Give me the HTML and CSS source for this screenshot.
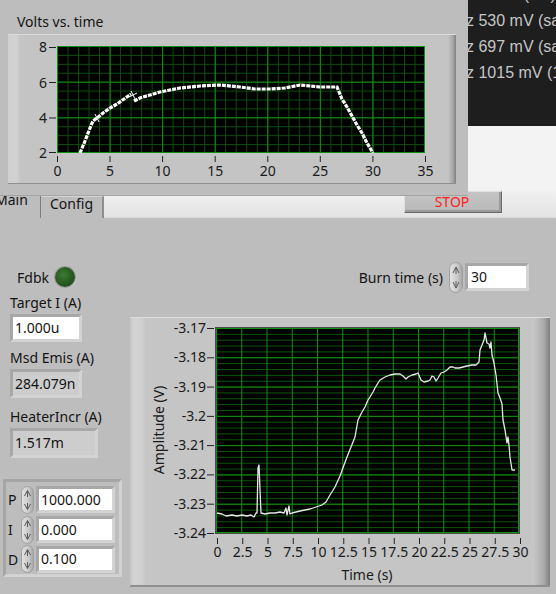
FILE: index.html
```html
<!DOCTYPE html>
<html>
<head>
<meta charset="utf-8">
<link rel="stylesheet" href="styles.css">
</head>
<body>
<div class="lv">
  <div class="lv-top"></div>
  <div class="tabbar">
    <div class="tab tab-active"><span>Main</span></div>
    <div class="tab tab-config">Config</div>
    <div class="tab-strip"><button class="stop">STOP</button></div>
  </div>
  <div class="page">
    <div class="left-col">
      <div class="fdbk"><span>Fdbk</span><span class="led"></span></div>
      <div class="lbl lbl-target">Target I (A)</div>
      <div class="num ctl w72 h28"><span>1.000u</span></div>
      <div class="lbl lbl-msd">Msd Emis (A)</div>
      <div class="num ind w72 h29"><span>284.079n</span></div>
      <div class="lbl lbl-heat">HeaterIncr (A)</div>
      <div class="num ind w88 h30"><span>1.517m</span></div>
      <div class="cluster">
        <div class="pid-row">
          <span class="pid-lbl">P</span>
          <svg class="spin" width="13" height="28" viewBox="0 0 13 28"><defs><linearGradient id="sg" x1="0" x2="1" y1="0" y2="0"><stop offset="0" stop-color="#e4e4e4"/><stop offset="0.6" stop-color="#c9c9c9"/><stop offset="1" stop-color="#a2a2a2"/></linearGradient></defs><rect x="0.5" y="0.5" width="12" height="27" rx="6" fill="url(#sg)" stroke="#a0a0a0"/><path d="M3.5 10 L6.5 4.5 L9.5 10 M6.5 5 V11" fill="none" stroke="#5a5a5a" stroke-width="1"/><path d="M3.5 18 L6.5 23.5 L9.5 18 M6.5 23 V17" fill="none" stroke="#5a5a5a" stroke-width="1"/></svg>
          <div class="num ctl pid-box"><span>1000.000</span></div>
        </div>
        <div class="pid-row">
          <span class="pid-lbl">I</span>
          <svg class="spin" width="13" height="28" viewBox="0 0 13 28"><rect x="0.5" y="0.5" width="12" height="27" rx="6" fill="url(#sg)" stroke="#a0a0a0"/><path d="M3.5 10 L6.5 4.5 L9.5 10 M6.5 5 V11" fill="none" stroke="#5a5a5a" stroke-width="1"/><path d="M3.5 18 L6.5 23.5 L9.5 18 M6.5 23 V17" fill="none" stroke="#5a5a5a" stroke-width="1"/></svg>
          <div class="num ctl pid-box"><span>0.000</span></div>
        </div>
        <div class="pid-row">
          <span class="pid-lbl">D</span>
          <svg class="spin" width="13" height="28" viewBox="0 0 13 28"><rect x="0.5" y="0.5" width="12" height="27" rx="6" fill="url(#sg)" stroke="#a0a0a0"/><path d="M3.5 10 L6.5 4.5 L9.5 10 M6.5 5 V11" fill="none" stroke="#5a5a5a" stroke-width="1"/><path d="M3.5 18 L6.5 23.5 L9.5 18 M6.5 23 V17" fill="none" stroke="#5a5a5a" stroke-width="1"/></svg>
          <div class="num ctl pid-box"><span>0.100</span></div>
        </div>
      </div>
    </div>
    <div class="right-col">
      <div class="burn">
        <span class="burn-lbl">Burn time (s)</span>
        <svg class="spin spin-burn" width="14" height="31" viewBox="0 0 14 31"><rect x="0.5" y="0.5" width="13" height="30" rx="6.5" fill="url(#sg)" stroke="#a0a0a0"/><path d="M4 11 L7 5 L10 11 M7 5.5 V12" fill="none" stroke="#5a5a5a" stroke-width="1"/><path d="M4 20 L7 26 L10 20 M7 25.5 V19" fill="none" stroke="#5a5a5a" stroke-width="1"/></svg>
        <div class="num ctl burn-box"><span>30</span></div>
      </div>
      <div class="graph-frame">
        <svg width="420" height="270" viewBox="130 317 420 270">
          <defs>
            <pattern id="bmin" patternUnits="userSpaceOnUse" x="216" y="328" width="25.25" height="5.857">
              <path d="M0 0.5 H25.25" stroke="#0c560c" stroke-width="1"/>
            </pattern>
            <pattern id="bmaj" patternUnits="userSpaceOnUse" x="216" y="328" width="25.25" height="29.286">
              <path d="M0.5 0 V29.286 M0 0.5 H25.25" stroke="#10900f" stroke-width="1"/>
            </pattern>
          </defs>
          <rect x="216" y="328" width="303" height="205" fill="#000"/>
          <rect x="216" y="328" width="303" height="205" fill="url(#bmin)"/>
          <rect x="216" y="328" width="303" height="205" fill="url(#bmaj)"/>
          <path d="M518.5 328 V533 M216 532.5 H519" stroke="#10900f"/>
          <rect x="215.5" y="327.5" width="304" height="206" fill="none" stroke="#4a4a4a"/>
          <polyline fill="none" stroke="#e8e8e8" stroke-width="1.3" stroke-linejoin="round" points="217,513 222,514 226,516 232,515 237,516 242,515 247,516 251,515 254,517 256,513 257,513 258,468 259,465 260,490 261,513 265,514 270,513 275,513 280,512 284,513 286,508 287,515 289,506 290,514 292,513 296,512 300,511 305,510 310,509 316,507 322,505 326,502 330,495 335,487 340,476 344,465 347,457 351,447 355,437 358,420 362,412 365,407 368,400 370,397 373,392 375,388 378,383 380,380 385,377 390,375 395,374 400,374 403,376 406,379 408,377 412,375 416,374 418,373 421,380 424,382 428,381 430,380 432,376 434,377 436,381 438,378 441,373 444,372 447,370 450,367 453,367 455,368 459,368 463,367 467,366 472,365 476,365 479,362 480,350 482,345 484,340 485,333 486,338 487,343 489,344 490,348 491,342 492,355 494,363 496,375 498,393 500,398 502,404 503,420 505,430 507,443 508,437 509,445 510,457 512,470 515,470"/>
          <g class="ax" text-anchor="end">
            <text x="206" y="333">-3.17</text>
            <text x="206" y="362.3">-3.18</text>
            <text x="206" y="391.6">-3.19</text>
            <text x="206" y="420.9">-3.2</text>
            <text x="206" y="450.1">-3.21</text>
            <text x="206" y="479.4">-3.22</text>
            <text x="206" y="508.7">-3.23</text>
            <text x="206" y="538">-3.24</text>
          </g>
          <path stroke="#222" stroke-width="1" d="M207 328.5H214 M207 357.8H214 M207 387.1H214 M207 416.4H214 M207 445.6H214 M207 474.9H214 M207 504.2H214 M207 533.5H214"/>
          <path stroke="#222" stroke-width="1" d="M217.5 538V544 M242.75 538V544 M268 538V544 M293.25 538V544 M318.5 538V544 M343.75 538V544 M369 538V544 M394.25 538V544 M419.5 538V544 M444.75 538V544 M470 538V544 M495.25 538V544 M520.5 538V544"/>
          <g class="ax" text-anchor="middle">
            <text x="217.5" y="557">0</text>
            <text x="242.75" y="557">2.5</text>
            <text x="268" y="557">5</text>
            <text x="293.25" y="557">7.5</text>
            <text x="318.5" y="557">10</text>
            <text x="343.75" y="557">12.5</text>
            <text x="369" y="557">15</text>
            <text x="394.25" y="557">17.5</text>
            <text x="419.5" y="557">20</text>
            <text x="444.75" y="557">22.5</text>
            <text x="470" y="557">25</text>
            <text x="495.25" y="557">27.5</text>
            <text x="520.5" y="557">30</text>
            <text x="367" y="580">Time (s)</text>
            <text x="0" y="0" transform="translate(164 430) rotate(-90)">Amplitude (V)</text>
          </g>
        </svg>
      </div>
    </div>
  </div>
</div>

<div class="dark-win">
  <div class="dline dline-cut">z 1 kHz (1 s)</div>
  <div class="dline">z 530 mV (sample)</div>
  <div class="dline">z 697 mV (sample)</div>
  <div class="dline">z 1015 mV (1 s)</div>
</div>

<div class="float-win">
  <div class="float-title">Volts vs. time</div>
  <div class="tframe">
    <svg width="448" height="150" viewBox="8 34 448 150">
      <defs>
        <pattern id="tmin" patternUnits="userSpaceOnUse" x="57" y="46" width="10.514" height="8.917">
          <path d="M0.5 0 V8.917 M0 0.5 H10.514" stroke="#0b4d0b" stroke-width="1"/>
        </pattern>
        <pattern id="tmaj" patternUnits="userSpaceOnUse" x="57" y="46" width="52.571" height="35.667">
          <path d="M0.5 0 V35.667 M0 0.5 H52.571" stroke="#109010" stroke-width="1"/>
        </pattern>
      </defs>
      <rect x="57" y="46" width="368" height="107" fill="#000"/>
      <rect x="57" y="46" width="368" height="107" fill="url(#tmin)"/>
      <rect x="57" y="46" width="368" height="107" fill="url(#tmaj)"/>
      <path d="M424.5 46 V153 M57 152.5 H425" stroke="#109010"/>
      <polyline fill="none" stroke="#fff" stroke-width="3.2" stroke-dasharray="4 1" points="80,153 85,141 90,128 93,121 97,118 103,113 110,108 117,104 124,99 131,94"/>
      <polyline fill="none" stroke="#fff" stroke-width="3.2" stroke-dasharray="4 1" points="134,101 140,98 150,95 160,92 170,90 180,88 200,86 220,85 240,87 255,89 270,89 285,88 300,85 320,87 337,87 342,99 347,107 352,116 357,125 362,133 367,143 373,153"/>
      <path d="M95 114 L99 122 M93 120 L101 116 M131 91 L135 99 M129 97 L137 93" stroke="#fff" stroke-width="1"/>
      <g class="ax" text-anchor="end">
        <text x="47" y="52">8</text>
        <text x="47" y="87.7">6</text>
        <text x="47" y="123.3">4</text>
        <text x="47" y="158">2</text>
      </g>
      <path stroke="#222" stroke-width="1" d="M49 47.5H56 M49 82.5H56 M49 118H56 M49 152.5H56"/>
      <path stroke="#222" stroke-width="1" d="M57.5 156V162 M110 156V162 M162.6 156V162 M215.2 156V162 M267.8 156V162 M320.3 156V162 M372.9 156V162 M425.5 156V162"/>
      <g class="ax" text-anchor="middle">
        <text x="57.5" y="176">0</text>
        <text x="110" y="176">5</text>
        <text x="162.6" y="176">10</text>
        <text x="215.2" y="176">15</text>
        <text x="267.8" y="176">20</text>
        <text x="320.3" y="176">25</text>
        <text x="372.9" y="176">30</text>
        <text x="425.5" y="176">35</text>
      </g>
    </svg>
  </div>
</div>
</body>
</html>
```
FILE: styles.css
```css
* { box-sizing: border-box; margin: 0; padding: 0; }
html, body { width: 556px; height: 594px; overflow: hidden; }
body {
  position: relative;
  font-family: "Noto Sans", "DejaVu Sans", sans-serif;
  font-size: 14px;
  color: #141414;
  background: #bdbdbd;
}

/* LabVIEW front panel window (behind) */
.lv { width: 556px; height: 594px; display: flex; flex-direction: column; }
.lv-top { height: 190px; background: #f3f3f3; flex: none; }
.tabbar {
  height: 28px; flex: none; display: flex; align-items: flex-end;
  background: linear-gradient(#f1f1f1, #e3e3e3);
}
.tab { background: #bdbdbd; flex: none; }
.tab-active {
  width: 41px; height: 26px; overflow: hidden;
  border-right: 1px solid #7d7d7d; line-height: 16px;
}
.tab-active span { display: block; margin-left: -5px; }
.tab-config {
  width: 63px; height: 22px; padding-left: 9px; line-height: 13px;
  border-right: 2px solid #8e8e8e; border-top: 1px solid #d2d2d2;
}
.tab-strip {
  flex: 1; align-self: stretch; display: flex; justify-content: flex-end;
  align-items: flex-start; padding: 1px 54px 0 0;
  border-bottom: 1px solid #dedede;
}
.stop {
  width: 98px; height: 22px; font: 14px "Noto Sans", sans-serif; color: #ff1c1c;
  background: linear-gradient(#c4c4c4, #b9b9b9);
  border: 1px solid; border-color: #e0e0e0 #6a6a6a #6a6a6a #e0e0e0;
  box-shadow: inset -2px -2px 0 #9a9a9a; padding-right: 2px; line-height: 18px;
}

.page {
  flex: 1; display: grid; grid-template-columns: 130px 1fr;
  background: #bdbdbd;
}

/* left column */
.left-col { padding-left: 10px; display: flex; flex-direction: column; align-items: flex-start; }
.fdbk { display: flex; align-items: center; gap: 6px; height: 22px; margin: 48px 0 0 7px; }
.led {
  width: 20px; height: 20px; border-radius: 50%;
  background: radial-gradient(circle at 42% 38%, #3c7a34 0, #2a5e24 45%, #183f14 100%);
  box-shadow: 0 0 0 1px #9c9c9c, 1px 1px 1px #e4e4e4;
}
.lbl { line-height: 18px; white-space: nowrap; }
.lbl-target { margin-top: 6px; }
.lbl-msd { margin-top: 7px; }
.lbl-heat { margin-top: 10px; }

.num {
  margin-top: 2px; border: 3px solid; border-color: #a7a7a7 #d3d3d3 #d3d3d3 #a7a7a7;
  display: flex; align-items: center; padding-left: 2px; white-space: nowrap;
}
.num span { line-height: 18px; }
.ctl { background: #fff; }
.ind { background: #cdcdcd; }
.w72 { width: 72px; } .w88 { width: 88px; }
.h28 { height: 28px; } .h29 { height: 29px; } .h30 { height: 30px; }

.cluster {
  margin: 21px 0 0 -7px; width: 119px; height: 98px;
  border: 3px solid; border-color: #a5a5a5 #d2d2d2 #d2d2d2 #a5a5a5;
  padding: 3px 0 0 2px;
  display: flex; flex-direction: column;
}
.pid-row { height: 30px; display: flex; align-items: center; }
.pid-lbl { width: 13px; }
.spin { display: block; flex: none; }
.pid-box { width: 79px; height: 27px; margin: 0 0 0 2px; }

/* right column */
.right-col { display: flex; flex-direction: column; }
.burn {
  margin-top: 45px; height: 28px; display: flex; align-items: center;
  justify-content: flex-end; padding-right: 27px;
}
.burn-lbl { margin-right: 6px; }
.spin-burn { margin-right: 2px; }
.burn-box { width: 64px; height: 28px; margin-top: 0; padding-left: 3px; }

.graph-frame {
  margin-top: 26px; width: 420px; height: 270px;
  background: linear-gradient(to right, #c4c4c4 0, #d3d3d3 4px, #cfcfcf 12px, #c5c5c5 16px, #c5c5c5 404px, #a9a9a9 414px, #7d7d7d 420px);
  border-top: 1px solid #dedede; border-bottom: 2px solid #8f8f8f;
}
.graph-frame svg, .tframe svg { display: block; margin-top: -1px; }
.ax { font-family: "Noto Sans", sans-serif; font-size: 14px; fill: #1a1a1a; }

/* dark window (desktop, right) */
.dark-win {
  position: absolute; left: 468px; top: 0; width: 88px; height: 126px;
  background: #1e1e1e; overflow: hidden; padding-left: 0;
}
.dline {
  font-family: "Liberation Sans", Arial, sans-serif; font-size: 16px; line-height: 26px;
  color: #c6c6c6; white-space: nowrap; margin-left: -2px;
}
.dline-cut { margin-top: -18px; }

/* floating graph window (desktop, left) */
.float-win {
  position: absolute; left: 0; top: 0; width: 468px; height: 196px;
  background: #bdbdbd; border-bottom: 1px solid #a6a6a6;
}
.float-title { padding: 12px 0 0 17px; line-height: 20px; height: 34px; }
.tframe {
  margin-left: 8px; width: 448px; height: 150px;
  background: linear-gradient(to right, #cfcfcf 0, #d2d2d2 8px, #c4c4c4 13px, #c4c4c4 440px, #a5a5a5 445px, #808080 448px);
  border-top: 1px solid #dcdcdc; border-bottom: 1px solid #8e8e8e;
}
.tframe svg { margin-top: -1px; }
```
